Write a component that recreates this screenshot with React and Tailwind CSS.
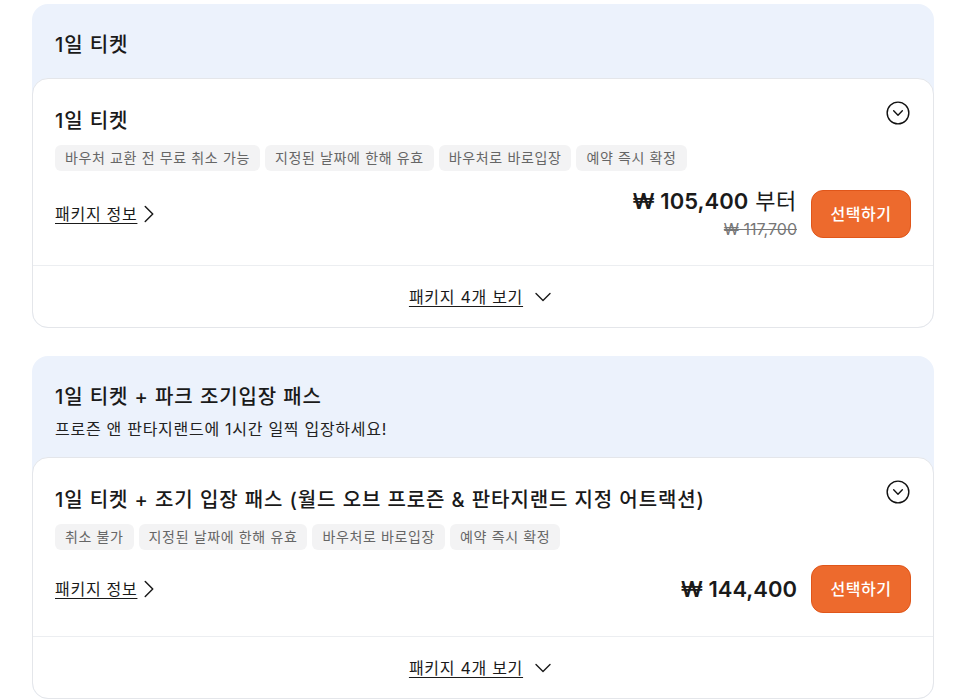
import { ChevronDown, ChevronRight, CircleChevronDown } from 'lucide-react'

const font = { fontFamily: 'Inter, "Noto Sans CJK KR", sans-serif' }

const packages = [
  {
    header: '1일 티켓',
    sub: null,
    title: '1일 티켓',
    tags: ['바우처 교환 전 무료 취소 가능', '지정된 날짜에 한해 유효', '바우처로 바로입장', '예약 즉시 확정'],
    price: '₩ 105,400',
    from: true,
    original: '₩ 117,700',
  },
  {
    header: '1일 티켓 + 파크 조기입장 패스',
    sub: '프로즌 앤 판타지랜드에 1시간 일찍 입장하세요!',
    title: '1일 티켓 + 조기 입장 패스 (월드 오브 프로즌 & 판타지랜드 지정 어트랙션)',
    tags: ['취소 불가', '지정된 날짜에 한해 유효', '바우처로 바로입장', '예약 즉시 확정'],
    price: '₩ 144,400',
    from: false,
    original: null,
  },
]

function PackageCard({ p }) {
  return (
    <section className="rounded-2xl bg-[#ecf2fc]">
      <div className={`px-[23px] pt-[27px] ${p.sub ? 'pb-[16px]' : 'pb-[19px]'}`}>
        <h2 className="text-[20px] leading-[28px] font-medium tracking-[0.045em] text-[#1a1a1a]">{p.header}</h2>
        {p.sub && <p className="mt-[6px] text-[16px] leading-[24px] tracking-[0.045em] text-[#222]">{p.sub}</p>}
      </div>
      <div className="rounded-2xl border border-[#e4e6ea] bg-white">
        <div className="px-[22px] pt-[28px] pb-[23px]">
          <div className="flex items-start justify-between">
            <h3 className="text-[20px] leading-[28px] font-medium tracking-[0.045em] text-[#1a1a1a]">{p.title}</h3>
            <CircleChevronDown className="mt-[-7px] h-[26px] w-[26px] text-[#111]" strokeWidth={1.3} />
          </div>
          <div className="mt-[10px] flex flex-wrap gap-[5px]">
            {p.tags.map(t => (
              <span key={t} className="rounded-md bg-[#f3f3f4] px-[10px] text-[14px] leading-[26px] tracking-[0.045em] text-[#666]">
                {t}
              </span>
            ))}
          </div>
          <div className="mt-[15px] flex min-h-[48px] items-center justify-between">
            <a className="flex items-center text-[16px] tracking-[0.045em] text-[#1a1a1a]">
              <span className="underline underline-offset-[3px]">패키지 정보</span>
              <ChevronRight className="-ml-[3px] h-[30px] w-[30px]" strokeWidth={1.2} />
            </a>
            <div className="flex items-center gap-[14px]">
              <div className="flex flex-col items-end">
                <div className="text-[22px] leading-[30px] text-[#1a1a1a]">
                  <span className="font-semibold">{p.price}</span>
                  {p.from && <span className="ml-[7px] tracking-[0.03em]">부터</span>}
                </div>
                {p.original && (
                  <div className="text-[16px] leading-[26px] text-[#777] line-through">{p.original}</div>
                )}
              </div>
              <button className="h-[48px] w-[100px] rounded-xl border border-[#e0561a] bg-[#ed6a2d] text-[16px] font-medium tracking-[0.03em] text-white">
                선택하기
              </button>
            </div>
          </div>
        </div>
        <div className="flex h-[62px] items-center justify-center border-t border-[#eceef1]">
          <a className="flex items-center gap-[6px] text-[16px] tracking-[0.045em] text-[#1a1a1a]">
            <span className="underline underline-offset-[3px]">패키지 4개 보기</span>
            <ChevronDown className="h-[28px] w-[28px]" strokeWidth={1.2} />
          </a>
        </div>
      </div>
    </section>
  )
}

export default function App() {
  return (
    <main style={font} className="min-h-screen bg-white px-8 pt-[4px]">
      <div className="flex flex-col gap-[28px]">
        {packages.map(p => (
          <PackageCard key={p.header} p={p} />
        ))}
      </div>
    </main>
  )
}
